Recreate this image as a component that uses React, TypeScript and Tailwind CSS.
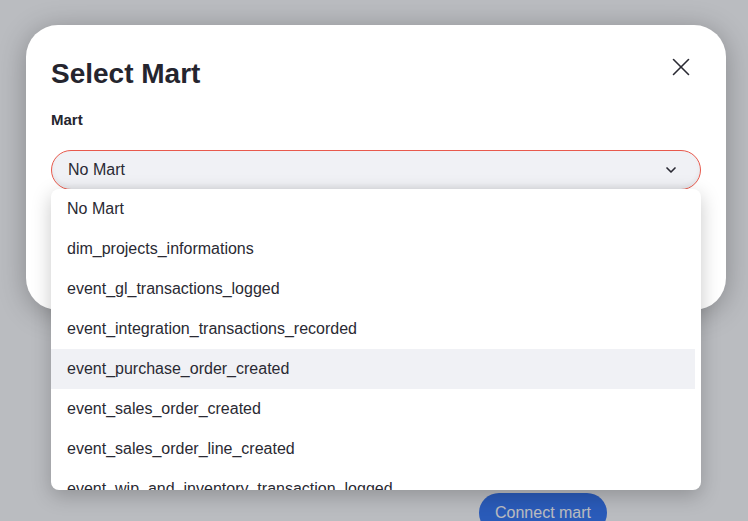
import { ChevronDown, X } from 'lucide-react'

const MARTS = [
  'No Mart',
  'dim_projects_informations',
  'event_gl_transactions_logged',
  'event_integration_transactions_recorded',
  'event_purchase_order_created',
  'event_sales_order_created',
  'event_sales_order_line_created',
  'event_wip_and_inventory_transaction_logged',
]

const HOVERED = 'event_purchase_order_created'

export default function App() {
  return (
    <div className="relative h-[521px] w-[748px] overflow-hidden bg-white font-['Liberation_Sans',Arial,sans-serif] text-[#2a2a33]">
      {/* page behind the dialog */}
      <div className="pl-[479px] pt-[493px]">
        <button className="h-10 rounded-full bg-[#3274f5] px-4 text-base text-white">Connect mart</button>
      </div>

      {/* overlay */}
      <div className="absolute inset-0 bg-[#1c2030]/30" />

      {/* dialog */}
      <div className="absolute left-[26px] top-[25px] h-[285px] w-[700px] rounded-[32px] bg-white px-[25px] pt-[33px] shadow-[0_4px_28px_rgba(0,0,0,0.28)]">
        <div className="flex items-start justify-between">
          <h2 className="text-[28px] font-bold leading-8 text-[#25252e]">Select Mart</h2>
          <button className="mr-[4px] -mt-[7px] flex h-8 w-8 items-center justify-center text-[#2a2a33]">
            <X className="h-[30px] w-[30px]" strokeWidth={1.3} />
          </button>
        </div>

        <div className="mt-[20px] text-[15px] font-bold leading-5 text-[#25252e]">Mart</div>

        <div className="relative mt-[20px]">
          <div className="flex h-10 items-center justify-between rounded-full border border-[#e8594c] bg-[#f0f1f5] pl-4 pr-[21px] shadow-[inset_0_-3px_4px_rgba(0,0,0,0.05)]">
            <span className="text-base text-[#2a2a33]">No Mart</span>
            <ChevronDown className="h-4 w-4 text-[#2a2a33]" strokeWidth={2.5} />
          </div>

          <ul className="absolute left-0 right-0 top-[39px] h-[301px] overflow-hidden rounded-lg bg-white shadow-[0_6px_20px_rgba(0,0,0,0.22)]">
            {MARTS.map((m) => (
              <li
                key={m}
                className={
                  m === HOVERED
                    ? 'mr-[6px] flex h-10 items-center bg-[#f0f1f5] px-4 text-base text-[#2a2a33]'
                    : 'mr-[6px] flex h-10 items-center px-4 text-base text-[#2a2a33]'
                }
              >
                {m}
              </li>
            ))}
          </ul>
        </div>
      </div>
    </div>
  )
}
